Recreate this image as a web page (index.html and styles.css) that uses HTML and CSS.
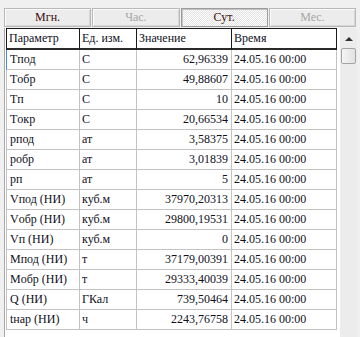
FILE: index.html
```html
<!DOCTYPE html>
<html lang="ru">
<head>
    <meta charset="UTF-8">
    <meta name="viewport" content="width=device-width, initial-scale=1.0">
    <title>Параметры</title>
    <link rel="stylesheet" href="styles.css">
</head>
<body>
    <div class="tabs">
        <button class="tab">Мгн.</button>
        <button class="tab disabled">Час.</button>
        <button class="tab active">Сут.</button>
        <button class="tab disabled">Мес.</button>
    </div>

    <div class="panel">
        <table class="grid">
            <thead>
                <tr>
                    <th class="c-name">Параметр</th>
                    <th class="c-unit">Ед. изм.</th>
                    <th class="c-value">Значение</th>
                    <th class="c-time">Время</th>
                </tr>
            </thead>
            <tbody>
                <tr class="current"><td>Tпод</td><td>C</td><td class="num">62,96339</td><td>24.05.16 00:00</td></tr>
                <tr><td>Tобр</td><td>C</td><td class="num">49,88607</td><td>24.05.16 00:00</td></tr>
                <tr><td>Tп</td><td>C</td><td class="num">10</td><td>24.05.16 00:00</td></tr>
                <tr><td>Tокр</td><td>C</td><td class="num">20,66534</td><td>24.05.16 00:00</td></tr>
                <tr><td>pпод</td><td>ат</td><td class="num">3,58375</td><td>24.05.16 00:00</td></tr>
                <tr><td>pобр</td><td>ат</td><td class="num">3,01839</td><td>24.05.16 00:00</td></tr>
                <tr><td>pп</td><td>ат</td><td class="num">5</td><td>24.05.16 00:00</td></tr>
                <tr><td>Vпод (НИ)</td><td>куб.м</td><td class="num">37970,20313</td><td>24.05.16 00:00</td></tr>
                <tr><td>Vобр (НИ)</td><td>куб.м</td><td class="num">29800,19531</td><td>24.05.16 00:00</td></tr>
                <tr><td>Vп (НИ)</td><td>куб.м</td><td class="num">0</td><td>24.05.16 00:00</td></tr>
                <tr><td>Mпод (НИ)</td><td>т</td><td class="num">37179,00391</td><td>24.05.16 00:00</td></tr>
                <tr><td>Mобр (НИ)</td><td>т</td><td class="num">29333,40039</td><td>24.05.16 00:00</td></tr>
                <tr><td>Q (НИ)</td><td>ГКал</td><td class="num">739,50464</td><td>24.05.16 00:00</td></tr>
                <tr><td>tнар (НИ)</td><td>ч</td><td class="num">2243,76758</td><td>24.05.16 00:00</td></tr>
            </tbody>
        </table>

        <div class="scrollbar">
            <div class="arrow-up"></div>
            <div class="thumb"></div>
        </div>
    </div>
</body>
</html>
```

FILE: styles.css
```css
body {
    margin: 0;
    background-color: #f0f0f0;
    font-family: "Liberation Serif", "Times New Roman", serif;
    font-size: 12px;
    color: #10101c;
    height: 337px;
    overflow: hidden;
}

.tabs {
    display: flex;
    gap: 1px;
    padding: 8px 4px 1px 4px;
}

.tab {
    flex: 1;
    height: 19px;
    padding: 0;
    font-family: inherit;
    font-size: 12px;
    color: #3c0a0a;
    background-color: #ececec;
    border: 1px solid #b9b9b9;
    box-shadow: inset 1px 1px #fbfbfb, inset -1px -1px #d6d6d6;
}

.tab.disabled {
    color: #a6a6a6;
}

.tab.active {
    background-image: repeating-conic-gradient(#ffffff 0 25%, #e2e2e2 0 50%);
    background-size: 2px 2px;
    border-color: #9c9c9c;
    box-shadow: inset 1px 1px #c4c4c4;
}

.panel {
    display: flex;
    height: 309px;
    margin: 0 3px 0 4px;
    padding-left: 1px;
    border-left: 1px solid #a8a8a8;
    background-color: #fff;
}

.grid {
    border-collapse: separate;
    border-spacing: 0;
    table-layout: fixed;
    width: 331px;
    align-self: flex-start;
}

.grid th,
.grid td {
    box-sizing: border-box;
    padding: 0 2px;
    white-space: nowrap;
    overflow: hidden;
    text-align: left;
    font-weight: normal;
}

.grid th {
    height: 22px;
    border-top: 1px solid #1a1a1a;
    border-right: 1px solid #1a1a1a;
    border-bottom: 2px solid #2a2a2a;
}

.grid th:first-child {
    border-left: 1px solid #1a1a1a;
}

.grid td {
    height: 20px;
    border-right: 1px solid #c3c3c3;
    border-bottom: 1px solid #c3c3c3;
}

.grid td:first-child {
    border-left: 1px solid #c3c3c3;
    padding-left: 3px;
}

.grid tr.current td:first-child {
    border-left-color: #3d8ee8;
}

.grid td.num {
    text-align: right;
    padding-right: 3px;
}

.c-name { width: 74px; }
.c-unit { width: 57px; }
.c-value { width: 95px; }
.c-time { width: 105px; }

.scrollbar {
    position: relative;
    width: 17px;
    margin-left: 3px;
    background-color: #ececec;
}

.arrow-up {
    width: 0;
    height: 0;
    margin: 9px auto 0;
    border-left: 4px solid transparent;
    border-right: 4px solid transparent;
    border-bottom: 4px solid #303030;
}

.thumb {
    width: 13px;
    height: 14px;
    margin: 7px 0 0 1px;
    border: 1px solid #a4a4a4;
    border-radius: 2px;
    background: linear-gradient(to right, #f4f4f4, #e2e2e2);
}
```
